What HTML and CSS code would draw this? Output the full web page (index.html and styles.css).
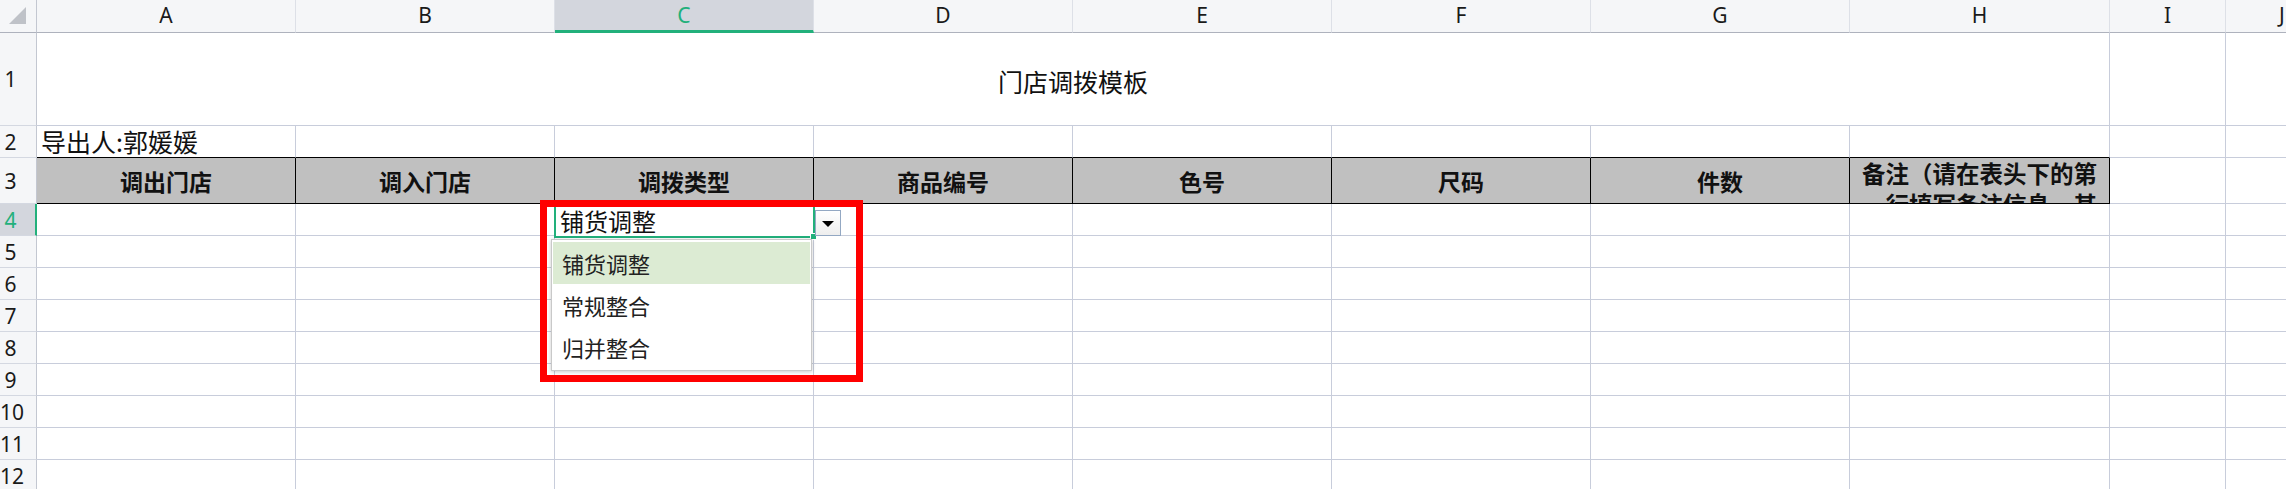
FILE: index.html
```html
<!DOCTYPE html>
<html lang="zh-CN">
<head>
<meta charset="utf-8">
<title>门店调拨模板</title>
<link rel="stylesheet" href="styles.css">
</head>
<body>
<div class="sheet">
  <div class="corner"><span class="tri"></span></div>
  <div class="colhead">A</div>
  <div class="colhead">B</div>
  <div class="colhead sel">C</div>
  <div class="colhead">D</div>
  <div class="colhead">E</div>
  <div class="colhead">F</div>
  <div class="colhead">G</div>
  <div class="colhead">H</div>
  <div class="colhead">I</div>
  <div class="colhead edge">J</div>

  <div class="rowhead"><span>1</span></div>
  <div class="cell title">门店调拨模板</div>
  <div class="cell"></div>
  <div class="cell"></div>

  <div class="rowhead"><span>2</span></div>
  <div class="cell r2 exporter">导出人:郭媛媛</div>
  <div class="cell r2"></div>
  <div class="cell r2"></div>
  <div class="cell r2"></div>
  <div class="cell r2"></div>
  <div class="cell r2"></div>
  <div class="cell r2"></div>
  <div class="cell r2"></div>
  <div class="cell"></div>
  <div class="cell"></div>

  <div class="rowhead"><span>3</span></div>
  <div class="cell hd">调出门店</div>
  <div class="cell hd">调入门店</div>
  <div class="cell hd">调拨类型</div>
  <div class="cell hd">商品编号</div>
  <div class="cell hd">色号</div>
  <div class="cell hd">尺码</div>
  <div class="cell hd">件数</div>
  <div class="cell hd note">备注（请在表头下的第一行填写备注信息，其他行无效）</div>
  <div class="cell"></div>
  <div class="cell"></div>

  <div class="rowhead selrow"><span>4</span></div>
  <div class="cell"></div><div class="cell"></div><div class="cell"></div><div class="cell"></div><div class="cell"></div><div class="cell"></div><div class="cell"></div><div class="cell"></div><div class="cell"></div><div class="cell"></div>
  <div class="rowhead"><span>5</span></div>
  <div class="cell"></div><div class="cell"></div><div class="cell"></div><div class="cell"></div><div class="cell"></div><div class="cell"></div><div class="cell"></div><div class="cell"></div><div class="cell"></div><div class="cell"></div>
  <div class="rowhead"><span>6</span></div>
  <div class="cell"></div><div class="cell"></div><div class="cell"></div><div class="cell"></div><div class="cell"></div><div class="cell"></div><div class="cell"></div><div class="cell"></div><div class="cell"></div><div class="cell"></div>
  <div class="rowhead"><span>7</span></div>
  <div class="cell"></div><div class="cell"></div><div class="cell"></div><div class="cell"></div><div class="cell"></div><div class="cell"></div><div class="cell"></div><div class="cell"></div><div class="cell"></div><div class="cell"></div>
  <div class="rowhead"><span>8</span></div>
  <div class="cell"></div><div class="cell"></div><div class="cell"></div><div class="cell"></div><div class="cell"></div><div class="cell"></div><div class="cell"></div><div class="cell"></div><div class="cell"></div><div class="cell"></div>
  <div class="rowhead"><span>9</span></div>
  <div class="cell"></div><div class="cell"></div><div class="cell"></div><div class="cell"></div><div class="cell"></div><div class="cell"></div><div class="cell"></div><div class="cell"></div><div class="cell"></div><div class="cell"></div>
  <div class="rowhead"><span>10</span></div>
  <div class="cell"></div><div class="cell"></div><div class="cell"></div><div class="cell"></div><div class="cell"></div><div class="cell"></div><div class="cell"></div><div class="cell"></div><div class="cell"></div><div class="cell"></div>
  <div class="rowhead"><span>11</span></div>
  <div class="cell"></div><div class="cell"></div><div class="cell"></div><div class="cell"></div><div class="cell"></div><div class="cell"></div><div class="cell"></div><div class="cell"></div><div class="cell"></div><div class="cell"></div>
  <div class="rowhead"><span>12</span></div>
  <div class="cell"></div><div class="cell"></div><div class="cell"></div><div class="cell"></div><div class="cell"></div><div class="cell"></div><div class="cell"></div><div class="cell"></div><div class="cell"></div><div class="cell"></div>
</div>

<div class="edit">铺货调整<span class="handle"></span></div>
<div class="ddbtn"><span class="arrow"></span></div>
<div class="ddlist">
  <div class="item active">铺货调整</div>
  <div class="item">常规整合</div>
  <div class="item">归并整合</div>
</div>
<div class="redbox"></div>
</body>
</html>
```

FILE: styles.css
```css
html, body {
  margin: 0;
  padding: 0;
  width: 2286px;
  height: 489px;
  overflow: hidden;
  background: #ffffff;
}

body {
  position: relative;
  font-family: "Noto Sans CJK SC", "Noto Sans", sans-serif;
  color: #111;
}

.sheet {
  display: grid;
  grid-template-columns: 37px 259px 259px 259px 259px 259px 259px 259px 260px 116px 113px;
  grid-template-rows: 33px 93px 32px 46px repeat(9, 32px);
}

.corner {
  background: #f5f6f8;
  border-right: 1px solid #c3c7d1;
  border-bottom: 1px solid #aeb2bd;
  box-sizing: border-box;
  position: relative;
}

.corner .tri {
  position: absolute;
  right: 10px;
  bottom: 8px;
  width: 0;
  height: 0;
  border-left: 17px solid transparent;
  border-bottom: 17px solid #bfc2c8;
}

.colhead {
  background: #f5f6f8;
  border-right: 1px solid #dde0e7;
  border-bottom: 1px solid #aeb2bd;
  box-sizing: border-box;
  display: flex;
  align-items: center;
  justify-content: center;
  font-family: "Noto Sans", "Noto Sans CJK SC", sans-serif;
  font-size: 21px;
  color: #1a1a1a;
  padding-bottom: 2px;
}

.colhead.edge {
  justify-content: flex-start;
  padding-left: 53px;
}

.colhead.sel {
  background: #d3d6dd;
  border-bottom: 3px solid #22b07b;
  color: #22b07b;
  padding-bottom: 0;
}

.rowhead {
  background: #f5f6f8;
  border-right: 1px solid #c3c7d1;
  border-bottom: 1px solid #d4d8e1;
  box-sizing: border-box;
  display: flex;
  align-items: center;
  font-family: "Noto Sans", "Noto Sans CJK SC", sans-serif;
  font-size: 21px;
  color: #1a1a1a;
}

.rowhead span {
  width: 21px;
  text-align: center;
}

.rowhead.selrow {
  background: #d3d6dd;
  color: #22b07b;
  border-right: 2px solid #22b07b;
}

.cell {
  border-right: 1px solid #c8cddb;
  border-bottom: 1px solid #c8cddb;
  box-sizing: border-box;
  min-width: 0;
  overflow: visible;
  white-space: nowrap;
}

.title {
  grid-column: span 8;
  display: flex;
  align-items: center;
  justify-content: center;
  font-size: 25px;
  padding-top: 4px;
  color: #111;
}

.r2 {
  border-bottom: 1px solid #000;
}

.exporter {
  font-size: 25px;
  line-height: 30px;
  padding-left: 4px;
  display: flex;
  align-items: flex-end;
  padding-bottom: 1px;
}

.hd {
  background: #c0c0c0;
  border-right: 1px solid #000;
  border-bottom: 1px solid #000;
  font-weight: 700;
  font-size: 23px;
  display: flex;
  align-items: center;
  justify-content: center;
  color: #111;
}

.hd.note {
  white-space: normal;
  align-items: flex-start;
  text-align: center;
  line-height: 31px;
  padding: 0 9px;
  overflow: hidden;
  font-size: 23.5px;
}

.edit {
  position: absolute;
  left: 554px;
  top: 204px;
  width: 261px;
  height: 34px;
  box-sizing: border-box;
  background: #fff;
  border-left: 2px solid #22b07b;
  border-right: 2px solid #22b07b;
  border-bottom: 2px solid #22b07b;
  font-size: 24px;
  line-height: 34px;
  padding-left: 4px;
  color: #111;
}

.edit .handle {
  position: absolute;
  right: -4px;
  bottom: -4px;
  width: 5px;
  height: 5px;
  background: #22b07b;
  border: 1px solid #fff;
}

.ddbtn {
  position: absolute;
  left: 815px;
  top: 210px;
  width: 26px;
  height: 26px;
  box-sizing: border-box;
  border: 1px solid #93a8c3;
  background: linear-gradient(#ffffff, #eeeeee);
  display: flex;
  align-items: center;
  justify-content: center;
}

.ddbtn .arrow {
  width: 0;
  height: 0;
  border-left: 6px solid transparent;
  border-right: 6px solid transparent;
  border-top: 6px solid #000;
  margin-top: 2px;
}

.ddlist {
  position: absolute;
  left: 551px;
  top: 239px;
  width: 261px;
  height: 132px;
  box-sizing: border-box;
  background: #fff;
  border: 1px solid #c9c9c9;
  box-shadow: 0 1px 4px rgba(0, 0, 0, 0.22);
  padding: 2px 1px;
  display: flex;
  flex-direction: column;
}

.item {
  height: 42px;
  display: flex;
  align-items: center;
  padding-left: 9px;
  font-size: 22px;
  color: #222;
}

.item.active {
  background: #dcebd3;
}

.redbox {
  position: absolute;
  left: 540px;
  top: 200px;
  width: 323px;
  height: 182px;
  box-sizing: border-box;
  border: 7px solid #ff0000;
}
```
